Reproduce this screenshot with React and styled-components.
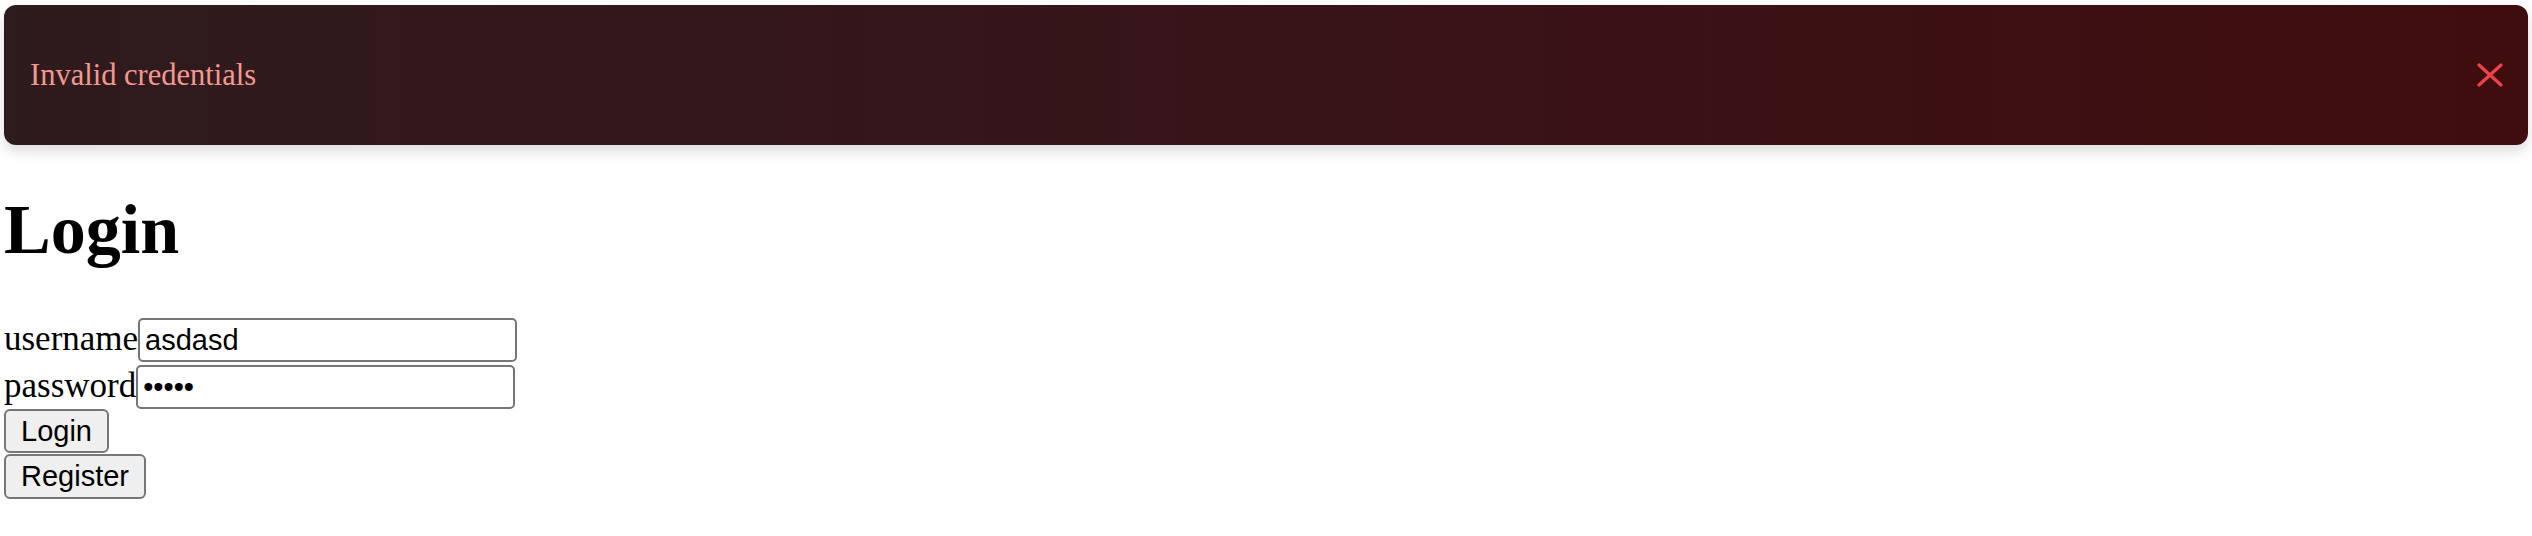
import React from 'react';
import styled, { createGlobalStyle } from 'styled-components';

const GlobalStyle = createGlobalStyle`
	html, body {
		margin: 0;
		padding: 0;
		background: #ffffff;
	}
	body {
		font-family: 'Liberation Serif', 'Times New Roman', serif;
		font-size: 35px;
		color: #000000;
	}
`;

const Page = styled.div`
	display: flex;
	flex-direction: column;
	align-items: flex-start;
	padding: 5px 4px 0 4px;
`;

const Toast = styled.div`
	align-self: stretch;
	box-sizing: border-box;
	height: 140px;
	display: flex;
	align-items: center;
	justify-content: space-between;
	padding: 0 25px 0 26px;
	border-radius: 12px;
	background: linear-gradient(90deg, #2e1b1d 0%, #37151a 45%, #400d0e 100%);
	box-shadow: 0 6px 14px rgba(0, 0, 0, 0.14);
`;

const ToastText = styled.span`
	font-size: 30.5px;
	color: #f59890;
`;

const CloseButton = styled.button`
	display: flex;
	align-items: center;
	justify-content: center;
	padding: 0;
	border: none;
	background: transparent;
	cursor: pointer;
`;

const Title = styled.h1`
	margin: 45px 0 0 0;
	font-size: 70px;
	line-height: 80px;
	font-weight: bold;
`;

const Form = styled.form`
	display: flex;
	flex-direction: column;
	align-items: flex-start;
	margin-top: 48px;
`;

const Field = styled.div`
	display: flex;
	align-items: baseline;
	height: ${(p) => p.$height}px;
`;

const Label = styled.label`
	font-size: 35px;
`;

const Input = styled.input`
	box-sizing: border-box;
	width: 379px;
	height: 44px;
	margin: 0;
	padding: 0 5px;
	font-family: 'Liberation Sans', Arial, sans-serif;
	font-size: 29px;
	color: #000000;
	border: 2px solid #767676;
	border-radius: 5px;
	background: #ffffff;
	outline: none;
`;

const Button = styled.button`
	box-sizing: border-box;
	height: ${(p) => p.$height}px;
	margin: 0 0 1px 0;
	padding: 0 15px;
	font-family: 'Liberation Sans', Arial, sans-serif;
	font-size: 29px;
	color: #000000;
	background: #efefef;
	border: 2px solid #767676;
	border-radius: 6px;
	cursor: pointer;
`;

function CloseIcon() {
	return (
		<svg width="26" height="26" viewBox="0 0 26 26" fill="none">
			<path d="M2 3L24 23M24 3L2 23" stroke="#ef4347" strokeWidth="3.2" strokeLinecap="round" />
		</svg>
	);
}

function App() {
	return (
		<>
			<GlobalStyle />
			<Page>
				<Toast>
					<ToastText>Invalid credentials</ToastText>
					<CloseButton type="button" aria-label="close">
						<CloseIcon />
					</CloseButton>
				</Toast>
				<Title>Login</Title>
				<Form onSubmit={(e) => e.preventDefault()}>
					<Field $height={47}>
						<Label htmlFor="username">username</Label>
						<Input id="username" type="text" defaultValue="asdasd" />
					</Field>
					<Field $height={44}>
						<Label htmlFor="password">password</Label>
						<Input id="password" type="password" defaultValue="asdas" />
					</Field>
					<Button type="submit" $height={44}>Login</Button>
					<Button type="button" $height={45}>Register</Button>
				</Form>
			</Page>
		</>
	);
}

export default App;
